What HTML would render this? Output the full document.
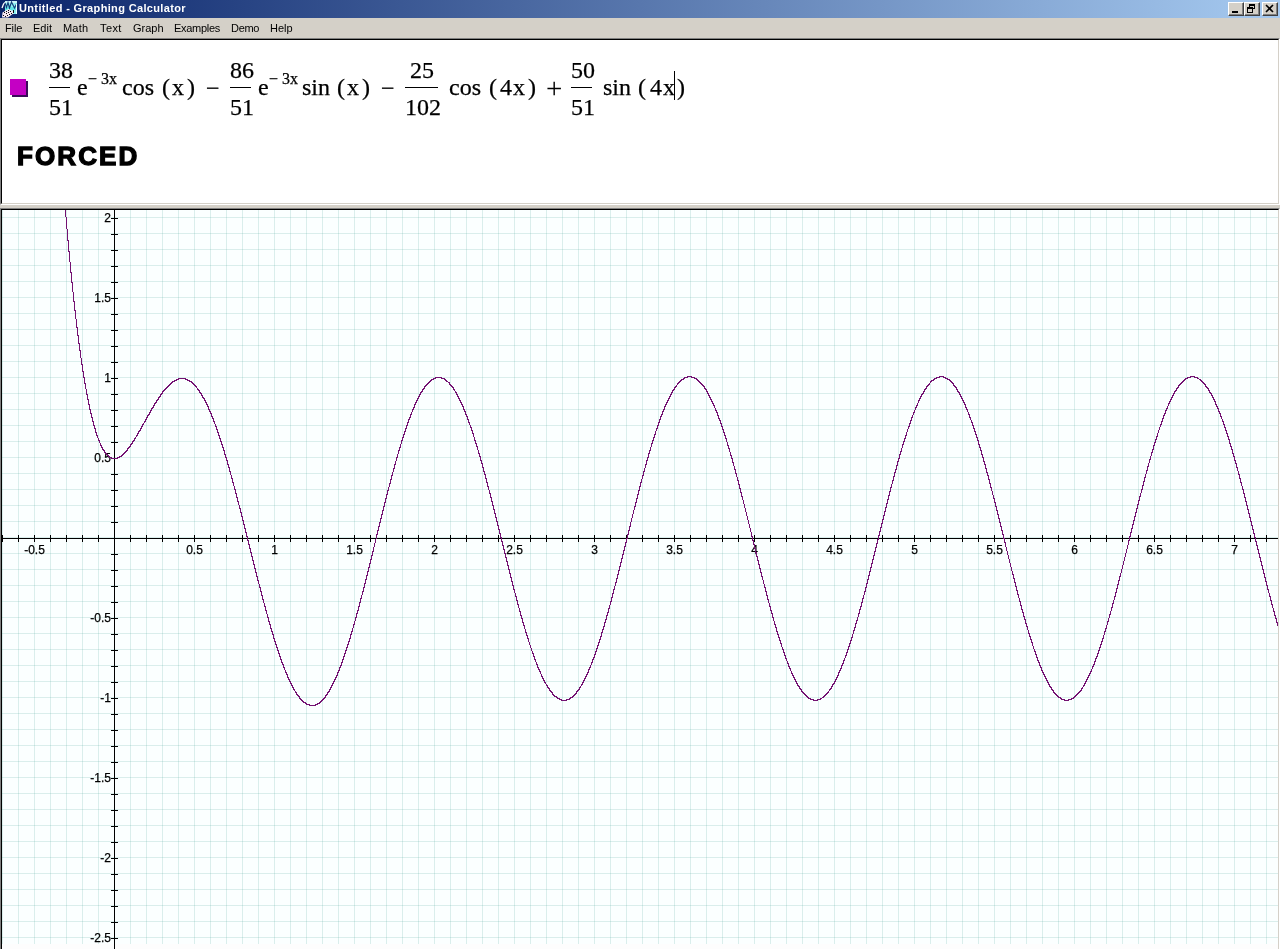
<!DOCTYPE html>
<html><head><meta charset="utf-8"><title>Untitled - Graphing Calculator</title>
<style>
html,body{margin:0;padding:0;}
body{width:1280px;height:949px;overflow:hidden;background:#d4d0c8;position:relative;font-family:"Liberation Sans",Arial,sans-serif;}
div,span,svg{position:absolute;}
span,#graph{will-change:transform;}
#title{left:0;top:0;width:1280px;height:18px;background:linear-gradient(to right,#0a246a 0%,#a6caf0 100%);}
#ttext{left:19px;top:1px;letter-spacing:0.35px;color:#fff;font-weight:bold;font-size:11px;line-height:14px;white-space:nowrap;}
.btn{top:2px;width:16px;height:14px;background:#d4d0c8;box-sizing:border-box;border:1px solid;border-color:#fff #404040 #404040 #fff;box-shadow:inset -1px -1px 0 #808080;}
#menu{left:0;top:18px;width:1280px;height:20px;background:#d4d0c8;}
#menu span{top:3px;font-size:11px;line-height:14px;color:#000;white-space:nowrap;}
#expr{left:0;top:38px;width:1280px;height:167px;background:#fff;box-sizing:border-box;border-left:1px solid #808080;border-top:1px solid #808080;border-right:1px solid #fff;border-bottom:1px solid #fff;}
#expr i{position:absolute;left:0;top:0;right:0;bottom:0;border-left:1px solid #000;border-top:1px solid #000;border-right:1px solid #d4d0c8;border-bottom:1px solid #d4d0c8;}
#gwrap{left:0;top:208px;width:1280px;height:741px;background:#fdfdfd;box-sizing:border-box;border-left:1px solid #808080;border-top:1px solid #808080;border-right:1px solid #fff;}
#gwrap i{position:absolute;left:0;top:0;right:0;bottom:0;border-left:1px solid #000;border-top:1px solid #000;border-right:1px solid #d4d0c8;}
#graph{left:2px;top:210px;}
.m,.s{-webkit-text-stroke:0.25px #000;}
.m{font-family:"Liberation Serif","Times New Roman",serif;color:#000;white-space:nowrap;font-size:24px;line-height:24px;}
.s{font-family:"Liberation Serif","Times New Roman",serif;color:#000;white-space:nowrap;font-size:16px;line-height:16px;}
.bar{height:1px;background:#000;}
#forced{left:17px;top:140px;font-weight:bold;font-size:26px;line-height:32px;color:#000;letter-spacing:2.1px;-webkit-text-stroke:1.3px #000;white-space:nowrap;}
</style></head><body>
<div id="title"></div>
<svg id="icon" style="left:0;top:0" width="18" height="18" viewBox="0 0 18 18"><rect x="5" y="1" width="12" height="13" fill="#8ef0f0"/><rect x="5" y="1" width="12" height="2" fill="#c8f4f8"/><path d="M5 7h12v3h-12z" fill="#5fe6e6"/><path d="M2 8L3.5 4L5 2.5" stroke="#fff" stroke-width="1.3" fill="none"/><path d="M5 3L6.5 7.5L8 2.5L9.5 8L11.5 2L13 5L14.5 8L16.5 4" stroke="#123a78" stroke-width="1.1" fill="none"/><path d="M16.5 4v10" stroke="#e8ffff" stroke-width="1"/><path d="M2 17.5L2.5 12.5L8.5 9L13.5 11.5L13.3 13.5L8 17.5z" fill="#f4e6f0"/><path d="M8 10h1v1h-1zM6 11h1v1h-1zM10 11h1v1h-1zM4 12h1v1h-1zM8 12h1v1h-1zM6 13h1v1h-1zM11 13h1v1h-1zM9 14h1v1h-1zM3 15h1v1h-1zM7 15h1v1h-1zM5 16h1v1h-1zM13 10h1v3h-1z" fill="#08080c" shape-rendering="crispEdges"/></svg>
<span id="ttext">Untitled - Graphing Calculator</span>
<div class="btn" style="left:1228px"><svg width="14" height="12" style="left:0;top:0"><rect x="3" y="8" width="6" height="2" fill="#000"/></svg></div>
<div class="btn" style="left:1244px"><svg width="14" height="12" style="left:0;top:0" shape-rendering="crispEdges"><path d="M4 1h6v5h-2v-1h1v-2h-4v1h-1z M2 4h6v6h-6z M3 6v3h4v-3z" fill="#000" fill-rule="evenodd"/></svg></div>
<div class="btn" style="left:1262px"><svg width="14" height="12" style="left:0;top:0"><path d="M3 2l7 7M10 2l-7 7" stroke="#000" stroke-width="1.6" fill="none"/></svg></div>
<div id="menu">
<span style="left:5px;letter-spacing:-0.1px">File</span><span style="left:33px">Edit</span><span style="left:63px;letter-spacing:0.2px">Math</span><span style="left:100px;letter-spacing:0.4px">Text</span><span style="left:133px">Graph</span><span style="left:174px;letter-spacing:-0.3px">Examples</span><span style="left:231px;letter-spacing:-0.3px">Demo</span><span style="left:270px">Help</span>
</div>
<div id="expr"><i></i></div>
<div id="sq" style="left:12px;top:81px;width:16px;height:16px;background:#3a0a5a"></div>
<div id="sq2" style="left:10px;top:79px;width:16px;height:16px;background:#c400c4"></div>

<span class="m" style="left:49px;top:58px">38</span><div class="bar" style="left:49px;top:87px;width:21px"></div><span class="m" style="left:49px;top:95px">51</span>
<span class="m" style="left:77px;top:75px">e</span><span class="s" style="left:88px;top:71px">− 3x</span>
<span class="m" style="left:122px;top:75px">cos</span><span class="m" style="left:162px;top:75px">(</span><span class="m" style="left:172px;top:75px">x</span><span class="m" style="left:187px;top:75px">)</span>
<span class="m" style="left:206px;top:76px">−</span>
<span class="m" style="left:230px;top:58px">86</span><div class="bar" style="left:230px;top:87px;width:21px"></div><span class="m" style="left:230px;top:95px">51</span>
<span class="m" style="left:258px;top:75px">e</span><span class="s" style="left:269px;top:71px">− 3x</span>
<span class="m" style="left:302px;top:75px">sin</span><span class="m" style="left:337px;top:75px">(</span><span class="m" style="left:347px;top:75px">x</span><span class="m" style="left:362px;top:75px">)</span>
<span class="m" style="left:381px;top:76px">−</span>
<span class="m" style="left:410px;top:58px">25</span><div class="bar" style="left:405px;top:87px;width:33px"></div><span class="m" style="left:405px;top:95px">102</span>
<span class="m" style="left:449px;top:75px">cos</span><span class="m" style="left:489px;top:75px">(</span><span class="m" style="left:500px;top:75px">4</span><span class="m" style="left:513px;top:75px">x</span><span class="m" style="left:528px;top:75px">)</span>
<span class="m" style="left:545.5px;top:76px;font-size:29px;-webkit-text-stroke:0">+</span>
<span class="m" style="left:571px;top:58px">50</span><div class="bar" style="left:571px;top:87px;width:21px"></div><span class="m" style="left:571px;top:95px">51</span>
<span class="m" style="left:603px;top:75px">sin</span><span class="m" style="left:638px;top:75px">(</span><span class="m" style="left:650px;top:75px">4</span><span class="m" style="left:663px;top:75px">x</span><span class="m" style="left:677px;top:75px">)</span>
<div id="caret" style="left:674px;top:71px;width:1px;height:29px;background:#000"></div>
<span id="forced">FORCED</span>

<div id="gwrap"><i></i></div>
<svg id="graph" width="1276" height="739" viewBox="2 210 1276 739" shape-rendering="crispEdges"><rect x="2" y="210" width="1276" height="739" fill="#fdfdfd"/><rect x="2" y="210" width="1276" height="734" fill="#fbffff"/><path d="M2 210h1v734h-1zM18 210h1v734h-1zM34 210h1v734h-1zM50 210h1v734h-1zM66 210h1v734h-1zM82 210h1v734h-1zM98 210h1v734h-1zM114 210h1v734h-1zM130 210h1v734h-1zM146 210h1v734h-1zM162 210h1v734h-1zM178 210h1v734h-1zM194 210h1v734h-1zM210 210h1v734h-1zM226 210h1v734h-1zM242 210h1v734h-1zM258 210h1v734h-1zM274 210h1v734h-1zM290 210h1v734h-1zM306 210h1v734h-1zM322 210h1v734h-1zM338 210h1v734h-1zM354 210h1v734h-1zM370 210h1v734h-1zM386 210h1v734h-1zM402 210h1v734h-1zM418 210h1v734h-1zM434 210h1v734h-1zM450 210h1v734h-1zM466 210h1v734h-1zM482 210h1v734h-1zM498 210h1v734h-1zM514 210h1v734h-1zM530 210h1v734h-1zM546 210h1v734h-1zM562 210h1v734h-1zM578 210h1v734h-1zM594 210h1v734h-1zM610 210h1v734h-1zM626 210h1v734h-1zM642 210h1v734h-1zM658 210h1v734h-1zM674 210h1v734h-1zM690 210h1v734h-1zM706 210h1v734h-1zM722 210h1v734h-1zM738 210h1v734h-1zM754 210h1v734h-1zM770 210h1v734h-1zM786 210h1v734h-1zM802 210h1v734h-1zM818 210h1v734h-1zM834 210h1v734h-1zM850 210h1v734h-1zM866 210h1v734h-1zM882 210h1v734h-1zM898 210h1v734h-1zM914 210h1v734h-1zM930 210h1v734h-1zM946 210h1v734h-1zM962 210h1v734h-1zM978 210h1v734h-1zM994 210h1v734h-1zM1010 210h1v734h-1zM1026 210h1v734h-1zM1042 210h1v734h-1zM1058 210h1v734h-1zM1074 210h1v734h-1zM1090 210h1v734h-1zM1106 210h1v734h-1zM1122 210h1v734h-1zM1138 210h1v734h-1zM1154 210h1v734h-1zM1170 210h1v734h-1zM1186 210h1v734h-1zM1202 210h1v734h-1zM1218 210h1v734h-1zM1234 210h1v734h-1zM1250 210h1v734h-1zM1266 210h1v734h-1z" fill="#5aa89e" fill-opacity="0.2"/><path d="M2 217h1276v1h-1276zM2 233h1276v1h-1276zM2 249h1276v1h-1276zM2 265h1276v1h-1276zM2 281h1276v1h-1276zM2 297h1276v1h-1276zM2 313h1276v1h-1276zM2 329h1276v1h-1276zM2 345h1276v1h-1276zM2 361h1276v1h-1276zM2 377h1276v1h-1276zM2 393h1276v1h-1276zM2 409h1276v1h-1276zM2 425h1276v1h-1276zM2 441h1276v1h-1276zM2 457h1276v1h-1276zM2 473h1276v1h-1276zM2 489h1276v1h-1276zM2 505h1276v1h-1276zM2 521h1276v1h-1276zM2 537h1276v1h-1276zM2 553h1276v1h-1276zM2 569h1276v1h-1276zM2 585h1276v1h-1276zM2 601h1276v1h-1276zM2 617h1276v1h-1276zM2 633h1276v1h-1276zM2 649h1276v1h-1276zM2 665h1276v1h-1276zM2 681h1276v1h-1276zM2 697h1276v1h-1276zM2 713h1276v1h-1276zM2 729h1276v1h-1276zM2 745h1276v1h-1276zM2 761h1276v1h-1276zM2 777h1276v1h-1276zM2 793h1276v1h-1276zM2 809h1276v1h-1276zM2 825h1276v1h-1276zM2 841h1276v1h-1276zM2 857h1276v1h-1276zM2 873h1276v1h-1276zM2 889h1276v1h-1276zM2 905h1276v1h-1276zM2 921h1276v1h-1276zM2 937h1276v1h-1276z" fill="#5aa89e" fill-opacity="0.2"/><path d="M114 210h1v739h-1zM2 538h1276v1h-1276zM2 535h1v7h-1zM18 535h1v7h-1zM34 535h1v7h-1zM50 535h1v7h-1zM66 535h1v7h-1zM82 535h1v7h-1zM98 535h1v7h-1zM130 535h1v7h-1zM146 535h1v7h-1zM162 535h1v7h-1zM178 535h1v7h-1zM194 535h1v7h-1zM210 535h1v7h-1zM226 535h1v7h-1zM242 535h1v7h-1zM258 535h1v7h-1zM274 535h1v7h-1zM290 535h1v7h-1zM306 535h1v7h-1zM322 535h1v7h-1zM338 535h1v7h-1zM354 535h1v7h-1zM370 535h1v7h-1zM386 535h1v7h-1zM402 535h1v7h-1zM418 535h1v7h-1zM434 535h1v7h-1zM450 535h1v7h-1zM466 535h1v7h-1zM482 535h1v7h-1zM498 535h1v7h-1zM514 535h1v7h-1zM530 535h1v7h-1zM546 535h1v7h-1zM562 535h1v7h-1zM578 535h1v7h-1zM594 535h1v7h-1zM610 535h1v7h-1zM626 535h1v7h-1zM642 535h1v7h-1zM658 535h1v7h-1zM674 535h1v7h-1zM690 535h1v7h-1zM706 535h1v7h-1zM722 535h1v7h-1zM738 535h1v7h-1zM754 535h1v7h-1zM770 535h1v7h-1zM786 535h1v7h-1zM802 535h1v7h-1zM818 535h1v7h-1zM834 535h1v7h-1zM850 535h1v7h-1zM866 535h1v7h-1zM882 535h1v7h-1zM898 535h1v7h-1zM914 535h1v7h-1zM930 535h1v7h-1zM946 535h1v7h-1zM962 535h1v7h-1zM978 535h1v7h-1zM994 535h1v7h-1zM1010 535h1v7h-1zM1026 535h1v7h-1zM1042 535h1v7h-1zM1058 535h1v7h-1zM1074 535h1v7h-1zM1090 535h1v7h-1zM1106 535h1v7h-1zM1122 535h1v7h-1zM1138 535h1v7h-1zM1154 535h1v7h-1zM1170 535h1v7h-1zM1186 535h1v7h-1zM1202 535h1v7h-1zM1218 535h1v7h-1zM1234 535h1v7h-1zM1250 535h1v7h-1zM1266 535h1v7h-1zM111 218h7v1h-7zM111 234h7v1h-7zM111 250h7v1h-7zM111 266h7v1h-7zM111 282h7v1h-7zM111 298h7v1h-7zM111 314h7v1h-7zM111 330h7v1h-7zM111 346h7v1h-7zM111 362h7v1h-7zM111 378h7v1h-7zM111 394h7v1h-7zM111 410h7v1h-7zM111 426h7v1h-7zM111 442h7v1h-7zM111 458h7v1h-7zM111 474h7v1h-7zM111 490h7v1h-7zM111 506h7v1h-7zM111 522h7v1h-7zM111 554h7v1h-7zM111 570h7v1h-7zM111 586h7v1h-7zM111 602h7v1h-7zM111 618h7v1h-7zM111 634h7v1h-7zM111 650h7v1h-7zM111 666h7v1h-7zM111 682h7v1h-7zM111 698h7v1h-7zM111 714h7v1h-7zM111 730h7v1h-7zM111 746h7v1h-7zM111 762h7v1h-7zM111 778h7v1h-7zM111 794h7v1h-7zM111 810h7v1h-7zM111 826h7v1h-7zM111 842h7v1h-7zM111 858h7v1h-7zM111 874h7v1h-7zM111 890h7v1h-7zM111 906h7v1h-7zM111 922h7v1h-7zM111 938h7v1h-7z" fill="#000"/><g font-family="'Liberation Sans', Arial, sans-serif" font-size="12" fill="#000" stroke="#000" stroke-width="0.25" shape-rendering="auto"><text x="34.5" y="554" text-anchor="middle">-0.5</text><text x="194.5" y="554" text-anchor="middle">0.5</text><text x="274.5" y="554" text-anchor="middle">1</text><text x="354.5" y="554" text-anchor="middle">1.5</text><text x="434.5" y="554" text-anchor="middle">2</text><text x="514.5" y="554" text-anchor="middle">2.5</text><text x="594.5" y="554" text-anchor="middle">3</text><text x="674.5" y="554" text-anchor="middle">3.5</text><text x="754.5" y="554" text-anchor="middle">4</text><text x="834.5" y="554" text-anchor="middle">4.5</text><text x="914.5" y="554" text-anchor="middle">5</text><text x="994.5" y="554" text-anchor="middle">5.5</text><text x="1074.5" y="554" text-anchor="middle">6</text><text x="1154.5" y="554" text-anchor="middle">6.5</text><text x="1234.5" y="554" text-anchor="middle">7</text><text x="111" y="942" text-anchor="end">-2.5</text><text x="111" y="862" text-anchor="end">-2</text><text x="111" y="782" text-anchor="end">-1.5</text><text x="111" y="702" text-anchor="end">-1</text><text x="111" y="622" text-anchor="end">-0.5</text><text x="111" y="462" text-anchor="end">0.5</text><text x="111" y="382" text-anchor="end">1</text><text x="111" y="302" text-anchor="end">1.5</text><text x="111" y="222" text-anchor="end">2</text></g><path d="M65 210h1v7h-1zM66 217h1v12h-1zM67 229h1v12h-1zM68 240h1v12h-1zM69 251h1v11h-1zM70 262h1v11h-1zM71 272h1v11h-1zM72 282h1v10h-1zM73 292h1v10h-1zM74 301h1v10h-1zM75 310h1v9h-1zM76 319h1v9h-1zM77 327h1v9h-1zM78 335h1v9h-1zM79 343h1v8h-1zM80 350h1v8h-1zM81 358h1v7h-1zM82 364h1v8h-1zM83 371h1v7h-1zM84 377h1v7h-1zM85 383h1v6h-1zM86 389h1v6h-1zM87 394h1v6h-1zM88 399h1v6h-1zM89 404h1v6h-1zM90 409h1v5h-1zM91 413h1v5h-1zM92 417h1v5h-1zM93 421h1v5h-1zM94 425h1v4h-1zM95 428h1v5h-1zM96 432h1v4h-1zM97 435h1v3h-1zM98 438h1v3h-1zM99 440h1v3h-1zM100 443h1v3h-1zM101 445h1v3h-1zM102 447h1v3h-1zM103 449h1v2h-1zM104 450h1v3h-1zM105 452h1v2h-1zM106 453h1v2h-1zM107 454h1v2h-1zM108 455h1v2h-1zM109 456h1v2h-1zM110 457h1v1h-1zM111 457h1v2h-1zM112 458h1v1h-1zM113 458h1v1h-1zM114 458h1v1h-1zM115 458h1v1h-1zM116 458h1v1h-1zM117 457h1v2h-1zM118 457h1v1h-1zM119 456h1v2h-1zM120 456h1v1h-1zM121 455h1v2h-1zM122 454h1v2h-1zM123 453h1v2h-1zM124 452h1v2h-1zM125 451h1v2h-1zM126 450h1v2h-1zM127 448h1v3h-1zM128 447h1v2h-1zM129 446h1v2h-1zM130 444h1v3h-1zM131 443h1v2h-1zM132 441h1v3h-1zM133 440h1v2h-1zM134 438h1v3h-1zM135 437h1v2h-1zM136 435h1v2h-1zM137 433h1v3h-1zM138 431h1v3h-1zM139 430h1v2h-1zM140 428h1v3h-1zM141 426h1v3h-1zM142 424h1v3h-1zM143 423h1v2h-1zM144 421h1v2h-1zM145 419h1v3h-1zM146 417h1v3h-1zM147 415h1v3h-1zM148 414h1v2h-1zM149 412h1v3h-1zM150 410h1v3h-1zM151 408h1v3h-1zM152 407h1v2h-1zM153 405h1v3h-1zM154 403h1v3h-1zM155 402h1v2h-1zM156 400h1v3h-1zM157 399h1v2h-1zM158 397h1v3h-1zM159 396h1v2h-1zM160 394h1v3h-1zM161 393h1v2h-1zM162 391h1v3h-1zM163 390h1v2h-1zM164 389h1v2h-1zM165 388h1v2h-1zM166 387h1v2h-1zM167 386h1v2h-1zM168 385h1v2h-1zM169 384h1v2h-1zM170 383h1v2h-1zM171 382h1v2h-1zM172 381h1v2h-1zM173 381h1v1h-1zM174 380h1v2h-1zM175 380h1v1h-1zM176 379h1v2h-1zM177 379h1v1h-1zM178 378h1v2h-1zM179 378h1v1h-1zM180 378h1v1h-1zM181 378h1v1h-1zM182 378h1v1h-1zM183 378h1v1h-1zM184 378h1v1h-1zM185 378h1v2h-1zM186 379h1v1h-1zM187 379h1v2h-1zM188 380h1v1h-1zM189 380h1v2h-1zM190 381h1v1h-1zM191 381h1v2h-1zM192 382h1v2h-1zM193 383h1v2h-1zM194 384h1v2h-1zM195 385h1v2h-1zM196 386h1v2h-1zM197 388h1v2h-1zM198 389h1v2h-1zM199 390h1v3h-1zM200 392h1v2h-1zM201 393h1v3h-1zM202 395h1v3h-1zM203 397h1v2h-1zM204 398h1v3h-1zM205 400h1v3h-1zM206 402h1v3h-1zM207 404h1v3h-1zM208 406h1v4h-1zM209 409h1v3h-1zM210 411h1v3h-1zM211 413h1v4h-1zM212 416h1v3h-1zM213 418h1v4h-1zM214 421h1v3h-1zM215 424h1v3h-1zM216 426h1v4h-1zM217 429h1v4h-1zM218 432h1v4h-1zM219 435h1v4h-1zM220 438h1v4h-1zM221 441h1v4h-1zM222 444h1v4h-1zM223 447h1v4h-1zM224 450h1v5h-1zM225 454h1v4h-1zM226 457h1v4h-1zM227 460h1v5h-1zM228 464h1v4h-1zM229 467h1v5h-1zM230 471h1v4h-1zM231 475h1v4h-1zM232 478h1v5h-1zM233 482h1v4h-1zM234 486h1v4h-1zM235 489h1v5h-1zM236 493h1v5h-1zM237 497h1v5h-1zM238 501h1v4h-1zM239 505h1v4h-1zM240 508h1v5h-1zM241 512h1v5h-1zM242 516h1v5h-1zM243 520h1v5h-1zM244 524h1v5h-1zM245 528h1v5h-1zM246 532h1v5h-1zM247 536h1v5h-1zM248 540h1v5h-1zM249 544h1v5h-1zM250 548h1v5h-1zM251 552h1v5h-1zM252 556h1v5h-1zM253 560h1v5h-1zM254 564h1v5h-1zM255 568h1v5h-1zM256 572h1v5h-1zM257 576h1v5h-1zM258 580h1v4h-1zM259 584h1v4h-1zM260 587h1v5h-1zM261 591h1v5h-1zM262 595h1v5h-1zM263 599h1v4h-1zM264 603h1v4h-1zM265 606h1v5h-1zM266 610h1v4h-1zM267 614h1v4h-1zM268 617h1v5h-1zM269 621h1v4h-1zM270 624h1v5h-1zM271 628h1v4h-1zM272 631h1v4h-1zM273 634h1v5h-1zM274 638h1v4h-1zM275 641h1v4h-1zM276 644h1v4h-1zM277 647h1v4h-1zM278 650h1v4h-1zM279 653h1v4h-1zM280 656h1v4h-1zM281 659h1v4h-1zM282 662h1v3h-1zM283 664h1v4h-1zM284 667h1v3h-1zM285 670h1v3h-1zM286 672h1v3h-1zM287 674h1v4h-1zM288 677h1v3h-1zM289 679h1v3h-1zM290 681h1v3h-1zM291 683h1v3h-1zM292 685h1v3h-1zM293 687h1v3h-1zM294 689h1v2h-1zM295 691h1v2h-1zM296 692h1v3h-1zM297 694h1v2h-1zM298 695h1v2h-1zM299 696h1v3h-1zM300 698h1v2h-1zM301 699h1v2h-1zM302 700h1v2h-1zM303 701h1v2h-1zM304 702h1v1h-1zM305 702h1v2h-1zM306 703h1v2h-1zM307 704h1v1h-1zM308 704h1v1h-1zM309 704h1v2h-1zM310 705h1v1h-1zM311 705h1v1h-1zM312 705h1v1h-1zM313 705h1v1h-1zM314 705h1v1h-1zM315 704h1v2h-1zM316 704h1v1h-1zM317 703h1v2h-1zM318 703h1v1h-1zM319 702h1v2h-1zM320 701h1v2h-1zM321 700h1v2h-1zM322 699h1v2h-1zM323 698h1v2h-1zM324 697h1v2h-1zM325 695h1v3h-1zM326 694h1v2h-1zM327 692h1v3h-1zM328 691h1v2h-1zM329 689h1v3h-1zM330 687h1v3h-1zM331 685h1v3h-1zM332 683h1v3h-1zM333 681h1v3h-1zM334 679h1v3h-1zM335 677h1v3h-1zM336 675h1v3h-1zM337 672h1v4h-1zM338 670h1v3h-1zM339 667h1v4h-1zM340 665h1v3h-1zM341 662h1v4h-1zM342 659h1v4h-1zM343 656h1v4h-1zM344 653h1v4h-1zM345 650h1v4h-1zM346 647h1v4h-1zM347 644h1v4h-1zM348 641h1v4h-1zM349 638h1v4h-1zM350 634h1v5h-1zM351 631h1v4h-1zM352 628h1v4h-1zM353 624h1v4h-1zM354 621h1v4h-1zM355 617h1v4h-1zM356 613h1v5h-1zM357 610h1v4h-1zM358 606h1v5h-1zM359 602h1v5h-1zM360 598h1v5h-1zM361 595h1v4h-1zM362 591h1v4h-1zM363 587h1v5h-1zM364 583h1v5h-1zM365 579h1v5h-1zM366 575h1v5h-1zM367 571h1v5h-1zM368 567h1v5h-1zM369 563h1v5h-1zM370 559h1v5h-1zM371 555h1v5h-1zM372 551h1v5h-1zM373 547h1v5h-1zM374 543h1v4h-1zM375 539h1v4h-1zM376 534h1v5h-1zM377 530h1v5h-1zM378 526h1v5h-1zM379 522h1v5h-1zM380 518h1v5h-1zM381 514h1v5h-1zM382 510h1v5h-1zM383 506h1v5h-1zM384 502h1v5h-1zM385 498h1v5h-1zM386 494h1v5h-1zM387 490h1v5h-1zM388 487h1v4h-1zM389 483h1v4h-1zM390 479h1v5h-1zM391 475h1v5h-1zM392 472h1v4h-1zM393 468h1v4h-1zM394 464h1v5h-1zM395 461h1v4h-1zM396 457h1v4h-1zM397 454h1v4h-1zM398 450h1v4h-1zM399 447h1v4h-1zM400 444h1v4h-1zM401 440h1v4h-1zM402 437h1v4h-1zM403 434h1v4h-1zM404 431h1v4h-1zM405 428h1v4h-1zM406 425h1v4h-1zM407 422h1v4h-1zM408 419h1v4h-1zM409 417h1v3h-1zM410 414h1v4h-1zM411 412h1v3h-1zM412 409h1v3h-1zM413 407h1v3h-1zM414 404h1v4h-1zM415 402h1v3h-1zM416 400h1v3h-1zM417 398h1v3h-1zM418 396h1v3h-1zM419 394h1v3h-1zM420 392h1v3h-1zM421 391h1v2h-1zM422 389h1v3h-1zM423 388h1v2h-1zM424 386h1v3h-1zM425 385h1v2h-1zM426 384h1v2h-1zM427 383h1v2h-1zM428 382h1v2h-1zM429 381h1v2h-1zM430 380h1v2h-1zM431 379h1v2h-1zM432 379h1v1h-1zM433 378h1v2h-1zM434 378h1v1h-1zM435 377h1v2h-1zM436 377h1v1h-1zM437 377h1v1h-1zM438 377h1v1h-1zM439 377h1v1h-1zM440 377h1v1h-1zM441 377h1v2h-1zM442 378h1v1h-1zM443 378h1v1h-1zM444 378h1v2h-1zM445 379h1v2h-1zM446 380h1v2h-1zM447 381h1v1h-1zM448 382h1v1h-1zM449 382h1v3h-1zM450 384h1v2h-1zM451 385h1v2h-1zM452 386h1v2h-1zM453 387h1v3h-1zM454 389h1v2h-1zM455 391h1v2h-1zM456 392h1v3h-1zM457 394h1v3h-1zM458 396h1v3h-1zM459 398h1v3h-1zM460 400h1v3h-1zM461 402h1v3h-1zM462 404h1v3h-1zM463 406h1v4h-1zM464 409h1v3h-1zM465 411h1v4h-1zM466 414h1v3h-1zM467 416h1v4h-1zM468 419h1v4h-1zM469 422h1v3h-1zM470 425h1v3h-1zM471 427h1v4h-1zM472 430h1v4h-1zM473 433h1v4h-1zM474 437h1v4h-1zM475 440h1v4h-1zM476 443h1v4h-1zM477 446h1v4h-1zM478 450h1v4h-1zM479 453h1v4h-1zM480 456h1v5h-1zM481 460h1v4h-1zM482 463h1v5h-1zM483 467h1v5h-1zM484 471h1v4h-1zM485 474h1v5h-1zM486 478h1v5h-1zM487 482h1v5h-1zM488 486h1v4h-1zM489 490h1v4h-1zM490 493h1v5h-1zM491 497h1v5h-1zM492 501h1v5h-1zM493 505h1v5h-1zM494 509h1v5h-1zM495 513h1v5h-1zM496 517h1v5h-1zM497 521h1v5h-1zM498 525h1v5h-1zM499 529h1v5h-1zM500 533h1v5h-1zM501 537h1v5h-1zM502 541h1v5h-1zM503 545h1v5h-1zM504 549h1v5h-1zM505 553h1v5h-1zM506 557h1v5h-1zM507 561h1v5h-1zM508 565h1v5h-1zM509 569h1v5h-1zM510 573h1v5h-1zM511 577h1v5h-1zM512 581h1v5h-1zM513 585h1v5h-1zM514 589h1v4h-1zM515 593h1v4h-1zM516 596h1v5h-1zM517 600h1v5h-1zM518 604h1v4h-1zM519 608h1v4h-1zM520 611h1v5h-1zM521 615h1v4h-1zM522 618h1v5h-1zM523 622h1v4h-1zM524 625h1v4h-1zM525 629h1v4h-1zM526 632h1v4h-1zM527 635h1v4h-1zM528 638h1v4h-1zM529 642h1v3h-1zM530 645h1v3h-1zM531 648h1v3h-1zM532 651h1v3h-1zM533 653h1v4h-1zM534 656h1v4h-1zM535 659h1v3h-1zM536 662h1v3h-1zM537 664h1v4h-1zM538 667h1v3h-1zM539 669h1v3h-1zM540 671h1v3h-1zM541 674h1v3h-1zM542 676h1v3h-1zM543 678h1v3h-1zM544 680h1v3h-1zM545 682h1v2h-1zM546 684h1v2h-1zM547 685h1v3h-1zM548 687h1v2h-1zM549 688h1v3h-1zM550 690h1v2h-1zM551 691h1v2h-1zM552 692h1v3h-1zM553 694h1v2h-1zM554 695h1v2h-1zM555 696h1v1h-1zM556 696h1v2h-1zM557 697h1v2h-1zM558 698h1v1h-1zM559 698h1v2h-1zM560 699h1v1h-1zM561 699h1v2h-1zM562 700h1v1h-1zM563 700h1v1h-1zM564 700h1v1h-1zM565 700h1v1h-1zM566 699h1v2h-1zM567 699h1v1h-1zM568 699h1v1h-1zM569 698h1v2h-1zM570 697h1v2h-1zM571 697h1v1h-1zM572 696h1v2h-1zM573 695h1v2h-1zM574 694h1v2h-1zM575 693h1v2h-1zM576 691h1v3h-1zM577 690h1v2h-1zM578 689h1v2h-1zM579 687h1v3h-1zM580 686h1v2h-1zM581 684h1v2h-1zM582 682h1v3h-1zM583 680h1v3h-1zM584 678h1v3h-1zM585 676h1v3h-1zM586 674h1v3h-1zM587 672h1v3h-1zM588 669h1v4h-1zM589 667h1v3h-1zM590 665h1v3h-1zM591 662h1v3h-1zM592 659h1v4h-1zM593 657h1v3h-1zM594 654h1v4h-1zM595 651h1v4h-1zM596 648h1v4h-1zM597 645h1v4h-1zM598 642h1v4h-1zM599 639h1v4h-1zM600 636h1v4h-1zM601 632h1v5h-1zM602 629h1v4h-1zM603 626h1v4h-1zM604 622h1v5h-1zM605 619h1v4h-1zM606 615h1v5h-1zM607 612h1v4h-1zM608 608h1v5h-1zM609 605h1v4h-1zM610 601h1v4h-1zM611 597h1v5h-1zM612 593h1v5h-1zM613 589h1v5h-1zM614 586h1v4h-1zM615 582h1v4h-1zM616 578h1v5h-1zM617 574h1v5h-1zM618 570h1v5h-1zM619 566h1v5h-1zM620 562h1v5h-1zM621 558h1v5h-1zM622 554h1v5h-1zM623 550h1v5h-1zM624 546h1v5h-1zM625 542h1v5h-1zM626 538h1v5h-1zM627 534h1v5h-1zM628 530h1v5h-1zM629 526h1v5h-1zM630 522h1v5h-1zM631 518h1v4h-1zM632 514h1v4h-1zM633 510h1v4h-1zM634 506h1v4h-1zM635 502h1v5h-1zM636 498h1v5h-1zM637 494h1v5h-1zM638 490h1v5h-1zM639 486h1v5h-1zM640 482h1v5h-1zM641 479h1v4h-1zM642 475h1v4h-1zM643 471h1v5h-1zM644 468h1v4h-1zM645 464h1v4h-1zM646 460h1v5h-1zM647 457h1v4h-1zM648 453h1v5h-1zM649 450h1v4h-1zM650 447h1v4h-1zM651 443h1v4h-1zM652 440h1v4h-1zM653 437h1v4h-1zM654 434h1v4h-1zM655 431h1v4h-1zM656 428h1v3h-1zM657 425h1v4h-1zM658 422h1v4h-1zM659 419h1v4h-1zM660 416h1v4h-1zM661 414h1v3h-1zM662 411h1v4h-1zM663 409h1v3h-1zM664 406h1v4h-1zM665 404h1v3h-1zM666 402h1v3h-1zM667 400h1v3h-1zM668 398h1v3h-1zM669 396h1v3h-1zM670 394h1v3h-1zM671 392h1v3h-1zM672 390h1v3h-1zM673 389h1v2h-1zM674 387h1v3h-1zM675 386h1v2h-1zM676 385h1v2h-1zM677 383h1v2h-1zM678 382h1v2h-1zM679 381h1v2h-1zM680 380h1v2h-1zM681 379h1v2h-1zM682 379h1v1h-1zM683 378h1v2h-1zM684 377h1v2h-1zM685 377h1v1h-1zM686 377h1v1h-1zM687 376h1v2h-1zM688 376h1v1h-1zM689 376h1v1h-1zM690 376h1v1h-1zM691 376h1v2h-1zM692 377h1v1h-1zM693 377h1v1h-1zM694 377h1v2h-1zM695 378h1v1h-1zM696 378h1v2h-1zM697 379h1v2h-1zM698 380h1v2h-1zM699 381h1v2h-1zM700 382h1v2h-1zM701 383h1v2h-1zM702 384h1v2h-1zM703 385h1v2h-1zM704 386h1v3h-1zM705 388h1v2h-1zM706 389h1v3h-1zM707 391h1v3h-1zM708 393h1v3h-1zM709 395h1v3h-1zM710 397h1v3h-1zM711 399h1v3h-1zM712 401h1v3h-1zM713 403h1v3h-1zM714 405h1v3h-1zM715 408h1v3h-1zM716 410h1v3h-1zM717 412h1v4h-1zM718 415h1v4h-1zM719 418h1v3h-1zM720 420h1v4h-1zM721 423h1v4h-1zM722 426h1v4h-1zM723 429h1v4h-1zM724 432h1v4h-1zM725 435h1v4h-1zM726 438h1v4h-1zM727 442h1v4h-1zM728 445h1v4h-1zM729 448h1v4h-1zM730 452h1v4h-1zM731 455h1v4h-1zM732 458h1v5h-1zM733 462h1v4h-1zM734 466h1v4h-1zM735 469h1v5h-1zM736 473h1v4h-1zM737 477h1v4h-1zM738 480h1v5h-1zM739 484h1v5h-1zM740 488h1v5h-1zM741 492h1v5h-1zM742 496h1v4h-1zM743 500h1v4h-1zM744 504h1v4h-1zM745 508h1v4h-1zM746 512h1v4h-1zM747 516h1v4h-1zM748 520h1v4h-1zM749 524h1v4h-1zM750 528h1v4h-1zM751 532h1v5h-1zM752 536h1v5h-1zM753 540h1v5h-1zM754 544h1v5h-1zM755 548h1v5h-1zM756 552h1v5h-1zM757 556h1v5h-1zM758 560h1v5h-1zM759 564h1v5h-1zM760 568h1v5h-1zM761 572h1v5h-1zM762 576h1v4h-1zM763 580h1v4h-1zM764 584h1v4h-1zM765 587h1v5h-1zM766 591h1v5h-1zM767 595h1v5h-1zM768 599h1v4h-1zM769 603h1v4h-1zM770 606h1v5h-1zM771 610h1v4h-1zM772 613h1v5h-1zM773 617h1v4h-1zM774 621h1v4h-1zM775 624h1v4h-1zM776 627h1v5h-1zM777 631h1v4h-1zM778 634h1v4h-1zM779 637h1v4h-1zM780 640h1v4h-1zM781 643h1v4h-1zM782 647h1v3h-1zM783 649h1v4h-1zM784 652h1v4h-1zM785 655h1v4h-1zM786 658h1v3h-1zM787 661h1v3h-1zM788 663h1v4h-1zM789 666h1v3h-1zM790 668h1v3h-1zM791 671h1v3h-1zM792 673h1v3h-1zM793 675h1v3h-1zM794 677h1v3h-1zM795 679h1v3h-1zM796 681h1v3h-1zM797 683h1v3h-1zM798 685h1v2h-1zM799 686h1v3h-1zM800 688h1v2h-1zM801 689h1v3h-1zM802 691h1v2h-1zM803 692h1v2h-1zM804 693h1v2h-1zM805 694h1v2h-1zM806 695h1v2h-1zM807 696h1v2h-1zM808 697h1v2h-1zM809 698h1v1h-1zM810 698h1v2h-1zM811 699h1v1h-1zM812 699h1v1h-1zM813 699h1v2h-1zM814 700h1v1h-1zM815 700h1v1h-1zM816 700h1v1h-1zM817 699h1v2h-1zM818 699h1v1h-1zM819 699h1v1h-1zM820 698h1v2h-1zM821 698h1v1h-1zM822 697h1v1h-1zM823 696h1v2h-1zM824 695h1v2h-1zM825 694h1v2h-1zM826 693h1v2h-1zM827 692h1v2h-1zM828 691h1v2h-1zM829 689h1v2h-1zM830 688h1v2h-1zM831 686h1v3h-1zM832 684h1v3h-1zM833 683h1v2h-1zM834 681h1v3h-1zM835 679h1v3h-1zM836 677h1v3h-1zM837 675h1v3h-1zM838 672h1v4h-1zM839 670h1v3h-1zM840 668h1v3h-1zM841 665h1v4h-1zM842 663h1v3h-1zM843 660h1v4h-1zM844 658h1v3h-1zM845 655h1v3h-1zM846 652h1v4h-1zM847 649h1v4h-1zM848 646h1v4h-1zM849 643h1v4h-1zM850 640h1v4h-1zM851 637h1v4h-1zM852 634h1v4h-1zM853 630h1v4h-1zM854 627h1v4h-1zM855 623h1v5h-1zM856 620h1v4h-1zM857 617h1v4h-1zM858 613h1v4h-1zM859 609h1v5h-1zM860 606h1v4h-1zM861 602h1v5h-1zM862 598h1v5h-1zM863 595h1v4h-1zM864 591h1v4h-1zM865 587h1v5h-1zM866 583h1v5h-1zM867 579h1v5h-1zM868 575h1v5h-1zM869 571h1v5h-1zM870 567h1v5h-1zM871 563h1v5h-1zM872 559h1v5h-1zM873 555h1v5h-1zM874 551h1v5h-1zM875 547h1v5h-1zM876 543h1v5h-1zM877 539h1v5h-1zM878 535h1v5h-1zM879 531h1v5h-1zM880 527h1v5h-1zM881 523h1v5h-1zM882 519h1v5h-1zM883 515h1v5h-1zM884 511h1v5h-1zM885 507h1v5h-1zM886 503h1v5h-1zM887 499h1v5h-1zM888 495h1v5h-1zM889 491h1v5h-1zM890 487h1v5h-1zM891 484h1v4h-1zM892 480h1v4h-1zM893 476h1v5h-1zM894 472h1v5h-1zM895 469h1v4h-1zM896 465h1v5h-1zM897 461h1v5h-1zM898 458h1v4h-1zM899 454h1v5h-1zM900 451h1v4h-1zM901 448h1v4h-1zM902 444h1v4h-1zM903 441h1v4h-1zM904 438h1v4h-1zM905 435h1v4h-1zM906 432h1v4h-1zM907 429h1v3h-1zM908 426h1v3h-1zM909 423h1v4h-1zM910 420h1v4h-1zM911 417h1v4h-1zM912 415h1v3h-1zM913 412h1v3h-1zM914 410h1v3h-1zM915 407h1v3h-1zM916 405h1v3h-1zM917 403h1v3h-1zM918 400h1v3h-1zM919 398h1v3h-1zM920 396h1v3h-1zM921 394h1v3h-1zM922 393h1v2h-1zM923 391h1v3h-1zM924 389h1v3h-1zM925 388h1v2h-1zM926 386h1v3h-1zM927 385h1v2h-1zM928 384h1v2h-1zM929 383h1v2h-1zM930 381h1v2h-1zM931 380h1v2h-1zM932 380h1v1h-1zM933 379h1v2h-1zM934 378h1v2h-1zM935 378h1v1h-1zM936 377h1v2h-1zM937 377h1v1h-1zM938 377h1v1h-1zM939 376h1v2h-1zM940 376h1v1h-1zM941 376h1v1h-1zM942 376h1v1h-1zM943 376h1v2h-1zM944 377h1v1h-1zM945 377h1v2h-1zM946 378h1v1h-1zM947 378h1v2h-1zM948 379h1v1h-1zM949 379h1v2h-1zM950 380h1v2h-1zM951 381h1v2h-1zM952 382h1v2h-1zM953 383h1v3h-1zM954 385h1v2h-1zM955 386h1v2h-1zM956 387h1v3h-1zM957 389h1v3h-1zM958 391h1v2h-1zM959 392h1v3h-1zM960 394h1v3h-1zM961 396h1v3h-1zM962 398h1v3h-1zM963 400h1v3h-1zM964 402h1v3h-1zM965 404h1v4h-1zM966 407h1v3h-1zM967 409h1v3h-1zM968 412h1v3h-1zM969 414h1v4h-1zM970 417h1v3h-1zM971 420h1v3h-1zM972 422h1v4h-1zM973 425h1v4h-1zM974 428h1v4h-1zM975 431h1v4h-1zM976 434h1v4h-1zM977 437h1v4h-1zM978 440h1v5h-1zM979 444h1v4h-1zM980 447h1v4h-1zM981 450h1v5h-1zM982 454h1v4h-1zM983 457h1v5h-1zM984 461h1v4h-1zM985 464h1v5h-1zM986 468h1v5h-1zM987 472h1v4h-1zM988 475h1v5h-1zM989 479h1v5h-1zM990 483h1v5h-1zM991 487h1v4h-1zM992 491h1v4h-1zM993 495h1v4h-1zM994 498h1v5h-1zM995 502h1v5h-1zM996 506h1v5h-1zM997 510h1v5h-1zM998 514h1v5h-1zM999 518h1v5h-1zM1000 522h1v5h-1zM1001 526h1v5h-1zM1002 530h1v5h-1zM1003 534h1v5h-1zM1004 538h1v5h-1zM1005 542h1v5h-1zM1006 547h1v4h-1zM1007 551h1v4h-1zM1008 555h1v4h-1zM1009 559h1v4h-1zM1010 563h1v4h-1zM1011 567h1v4h-1zM1012 571h1v4h-1zM1013 574h1v5h-1zM1014 578h1v5h-1zM1015 582h1v5h-1zM1016 586h1v5h-1zM1017 590h1v5h-1zM1018 594h1v4h-1zM1019 598h1v4h-1zM1020 601h1v5h-1zM1021 605h1v5h-1zM1022 609h1v4h-1zM1023 612h1v5h-1zM1024 616h1v4h-1zM1025 619h1v5h-1zM1026 623h1v4h-1zM1027 626h1v4h-1zM1028 630h1v4h-1zM1029 633h1v4h-1zM1030 636h1v4h-1zM1031 639h1v4h-1zM1032 642h1v4h-1zM1033 646h1v3h-1zM1034 649h1v3h-1zM1035 651h1v4h-1zM1036 654h1v4h-1zM1037 657h1v4h-1zM1038 660h1v3h-1zM1039 662h1v4h-1zM1040 665h1v3h-1zM1041 667h1v4h-1zM1042 670h1v3h-1zM1043 672h1v3h-1zM1044 674h1v3h-1zM1045 676h1v3h-1zM1046 678h1v3h-1zM1047 680h1v3h-1zM1048 682h1v3h-1zM1049 684h1v3h-1zM1050 686h1v2h-1zM1051 687h1v3h-1zM1052 689h1v2h-1zM1053 690h1v3h-1zM1054 692h1v2h-1zM1055 693h1v2h-1zM1056 694h1v2h-1zM1057 695h1v2h-1zM1058 696h1v2h-1zM1059 697h1v1h-1zM1060 697h1v2h-1zM1061 698h1v2h-1zM1062 699h1v1h-1zM1063 699h1v1h-1zM1064 699h1v2h-1zM1065 700h1v1h-1zM1066 700h1v1h-1zM1067 700h1v1h-1zM1068 699h1v2h-1zM1069 699h1v1h-1zM1070 699h1v1h-1zM1071 698h1v2h-1zM1072 698h1v1h-1zM1073 697h1v2h-1zM1074 696h1v2h-1zM1075 695h1v2h-1zM1076 694h1v2h-1zM1077 693h1v2h-1zM1078 692h1v2h-1zM1079 691h1v2h-1zM1080 690h1v2h-1zM1081 688h1v3h-1zM1082 687h1v2h-1zM1083 685h1v2h-1zM1084 683h1v3h-1zM1085 681h1v3h-1zM1086 679h1v3h-1zM1087 677h1v3h-1zM1088 675h1v3h-1zM1089 673h1v3h-1zM1090 671h1v3h-1zM1091 669h1v3h-1zM1092 666h1v3h-1zM1093 664h1v3h-1zM1094 661h1v4h-1zM1095 658h1v4h-1zM1096 656h1v3h-1zM1097 653h1v4h-1zM1098 650h1v4h-1zM1099 647h1v4h-1zM1100 644h1v4h-1zM1101 641h1v4h-1zM1102 638h1v4h-1zM1103 635h1v4h-1zM1104 631h1v4h-1zM1105 628h1v4h-1zM1106 625h1v4h-1zM1107 621h1v4h-1zM1108 618h1v4h-1zM1109 614h1v4h-1zM1110 611h1v4h-1zM1111 607h1v4h-1zM1112 603h1v5h-1zM1113 600h1v4h-1zM1114 596h1v4h-1zM1115 592h1v5h-1zM1116 588h1v5h-1zM1117 584h1v5h-1zM1118 580h1v5h-1zM1119 576h1v5h-1zM1120 573h1v4h-1zM1121 569h1v4h-1zM1122 565h1v4h-1zM1123 561h1v4h-1zM1124 557h1v4h-1zM1125 553h1v4h-1zM1126 549h1v4h-1zM1127 545h1v4h-1zM1128 540h1v5h-1zM1129 536h1v5h-1zM1130 532h1v5h-1zM1131 528h1v5h-1zM1132 524h1v5h-1zM1133 520h1v5h-1zM1134 516h1v5h-1zM1135 512h1v5h-1zM1136 508h1v5h-1zM1137 504h1v5h-1zM1138 500h1v5h-1zM1139 496h1v5h-1zM1140 493h1v4h-1zM1141 489h1v4h-1zM1142 485h1v5h-1zM1143 481h1v5h-1zM1144 477h1v5h-1zM1145 474h1v4h-1zM1146 470h1v4h-1zM1147 466h1v5h-1zM1148 463h1v4h-1zM1149 459h1v4h-1zM1150 456h1v4h-1zM1151 452h1v4h-1zM1152 449h1v4h-1zM1153 445h1v5h-1zM1154 442h1v4h-1zM1155 439h1v4h-1zM1156 436h1v4h-1zM1157 433h1v4h-1zM1158 430h1v3h-1zM1159 427h1v3h-1zM1160 424h1v3h-1zM1161 421h1v4h-1zM1162 418h1v4h-1zM1163 415h1v4h-1zM1164 413h1v3h-1zM1165 410h1v4h-1zM1166 408h1v3h-1zM1167 406h1v3h-1zM1168 403h1v3h-1zM1169 401h1v3h-1zM1170 399h1v3h-1zM1171 397h1v3h-1zM1172 395h1v3h-1zM1173 393h1v3h-1zM1174 391h1v3h-1zM1175 390h1v2h-1zM1176 388h1v3h-1zM1177 387h1v2h-1zM1178 385h1v3h-1zM1179 384h1v2h-1zM1180 383h1v2h-1zM1181 382h1v2h-1zM1182 381h1v2h-1zM1183 380h1v2h-1zM1184 379h1v2h-1zM1185 378h1v2h-1zM1186 378h1v1h-1zM1187 377h1v2h-1zM1188 377h1v1h-1zM1189 377h1v1h-1zM1190 376h1v2h-1zM1191 376h1v1h-1zM1192 376h1v1h-1zM1193 376h1v1h-1zM1194 376h1v2h-1zM1195 377h1v1h-1zM1196 377h1v1h-1zM1197 377h1v2h-1zM1198 378h1v1h-1zM1199 379h1v1h-1zM1200 379h1v2h-1zM1201 380h1v2h-1zM1202 381h1v2h-1zM1203 382h1v2h-1zM1204 383h1v2h-1zM1205 384h1v3h-1zM1206 386h1v2h-1zM1207 387h1v2h-1zM1208 388h1v3h-1zM1209 390h1v3h-1zM1210 392h1v2h-1zM1211 393h1v3h-1zM1212 395h1v3h-1zM1213 397h1v3h-1zM1214 399h1v3h-1zM1215 401h1v4h-1zM1216 404h1v3h-1zM1217 406h1v3h-1zM1218 408h1v4h-1zM1219 411h1v3h-1zM1220 413h1v4h-1zM1221 416h1v3h-1zM1222 419h1v3h-1zM1223 421h1v4h-1zM1224 424h1v4h-1zM1225 427h1v4h-1zM1226 430h1v4h-1zM1227 433h1v4h-1zM1228 436h1v4h-1zM1229 439h1v5h-1zM1230 443h1v4h-1zM1231 446h1v4h-1zM1232 449h1v5h-1zM1233 453h1v4h-1zM1234 456h1v5h-1zM1235 460h1v4h-1zM1236 463h1v5h-1zM1237 467h1v4h-1zM1238 471h1v4h-1zM1239 474h1v5h-1zM1240 478h1v5h-1zM1241 482h1v4h-1zM1242 486h1v4h-1zM1243 489h1v5h-1zM1244 493h1v5h-1zM1245 497h1v5h-1zM1246 501h1v5h-1zM1247 505h1v5h-1zM1248 509h1v5h-1zM1249 513h1v5h-1zM1250 517h1v5h-1zM1251 521h1v5h-1zM1252 525h1v5h-1zM1253 529h1v5h-1zM1254 533h1v5h-1zM1255 537h1v5h-1zM1256 541h1v5h-1zM1257 545h1v5h-1zM1258 549h1v5h-1zM1259 553h1v5h-1zM1260 557h1v5h-1zM1261 561h1v5h-1zM1262 565h1v5h-1zM1263 569h1v5h-1zM1264 573h1v5h-1zM1265 577h1v5h-1zM1266 581h1v5h-1zM1267 585h1v5h-1zM1268 589h1v4h-1zM1269 593h1v4h-1zM1270 596h1v5h-1zM1271 600h1v5h-1zM1272 604h1v4h-1zM1273 608h1v4h-1zM1274 611h1v5h-1zM1275 615h1v4h-1zM1276 618h1v5h-1zM1277 622h1v4h-1z" fill="#741272"/></svg>
</body></html>
